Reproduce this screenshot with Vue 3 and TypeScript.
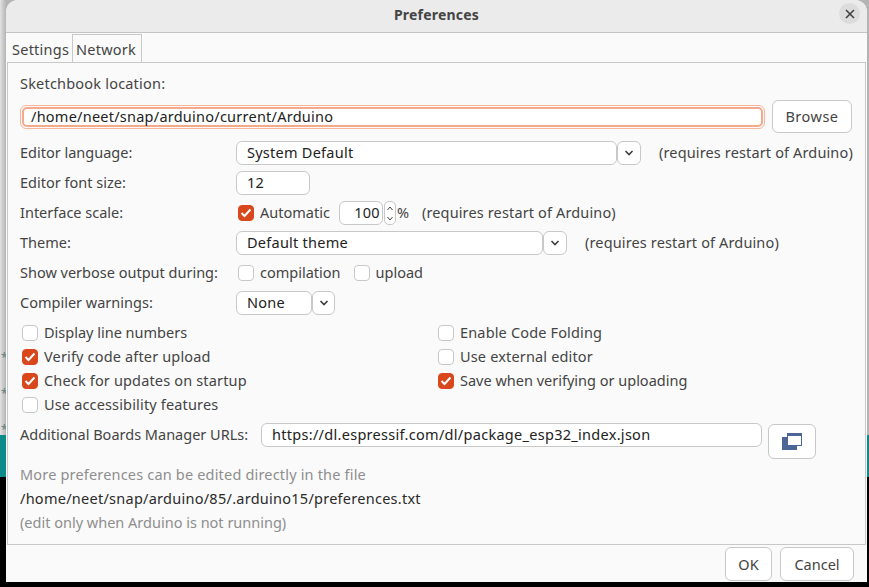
<script setup lang="ts">
const leftChecks = [
  { label: 'Display line numbers', on: false, tight: true },
  { label: 'Verify code after upload', on: true, tight: false },
  { label: 'Check for updates on startup', on: true, tight: false },
  { label: 'Use accessibility features', on: false, tight: false },
]
const rightChecks = [
  { label: 'Enable Code Folding', on: false, tight: false },
  { label: 'Use external editor', on: false, tight: false },
  { label: 'Save when verifying or uploading', on: true, tight: true },
]
</script>

<template>
  <div class="desktop">
    <div class="strip">
      <div class="strip-grey"></div>
      <div class="strip-teal"></div>
    </div>
    <span class="star star-a">*</span>
    <span class="star star-b">*</span>
    <span class="star star-c">*</span>
    <div class="dialog">
      <header class="titlebar">
        <span class="title">Preferences</span>
        <span class="close">
          <svg width="10" height="10" viewBox="0 0 10 10"><path d="M1 1l8 8M9 1l-8 8" stroke="#3d3d3d" stroke-width="1.500" fill="none" /></svg>
        </span>
      </header>
      <div class="body">
        <div class="tabs">
          <span class="tab tab-active">Settings</span>
          <span class="tab tab-idle">Network</span>
        </div>
        <div class="panel">
          <div class="sketch-label">Sketchbook location:</div>
          <div class="sketch-row">
            <div class="focus-ring"><div class="focus-inner">/home/neet/snap/arduino/current/Arduino</div></div>
            <button class="btn browse">Browse</button>
          </div>

          <div class="row row-lang">
            <span class="lbl">Editor language:</span>
            <div class="combo">
              <span class="field combo-lang">System Default</span>
              <span class="arrow"><svg width="10" height="6" viewBox="0 0 10 6"><path d="M1.500 1l3.500 3.500 3.500-3.500" stroke="#3d3d3d" stroke-width="1.600" fill="none" /></svg></span>
            </div>
            <span class="note note-lang">(requires restart of Arduino)</span>
          </div>

          <div class="row">
            <span class="lbl">Editor font size:</span>
            <span class="field font-size">12</span>
          </div>

          <div class="row">
            <span class="lbl">Interface scale:</span>
            <span class="check on scale-check"><svg width="12" height="10" viewBox="0 0 12 10"><path d="M1.500 5l3 3 6-6.500" stroke="#fff" stroke-width="2" fill="none" /></svg></span>
            <span class="txt">Automatic</span>
            <span class="field spin">100</span>
            <span class="spin-btn">
              <svg width="8" height="17" viewBox="0 0 8 17"><path d="M1.500 5l2.500-3 2.500 3M1.500 12l2.500 3 2.500-3" stroke="#444" stroke-width="1" fill="none" /></svg>
            </span>
            <span class="txt pct">%</span>
            <span class="note note-scale">(requires restart of Arduino)</span>
          </div>

          <div class="row">
            <span class="lbl">Theme:</span>
            <div class="combo">
              <span class="field combo-theme">Default theme</span>
              <span class="arrow"><svg width="10" height="6" viewBox="0 0 10 6"><path d="M1.500 1l3.500 3.500 3.500-3.500" stroke="#3d3d3d" stroke-width="1.600" fill="none" /></svg></span>
            </div>
            <span class="note note-theme">(requires restart of Arduino)</span>
          </div>

          <div class="row">
            <span class="lbl">Show verbose output during:</span>
            <span class="check verbose-check"></span>
            <span class="txt">compilation</span>
            <span class="check upload-check"></span>
            <span class="txt">upload</span>
          </div>

          <div class="row">
            <span class="lbl">Compiler warnings:</span>
            <div class="combo">
              <span class="field combo-none">None</span>
              <span class="arrow arrow-small"><svg width="10" height="6" viewBox="0 0 10 6"><path d="M1.500 1l3.500 3.500 3.500-3.500" stroke="#3d3d3d" stroke-width="1.600" fill="none" /></svg></span>
            </div>
          </div>

          <div class="checks">
            <div class="check-col col-left">
              <div v-for="c in leftChecks" :key="c.label" class="check-row" :class="{ tight: c.tight }">
                <span class="check" :class="{ on: c.on }"><svg v-if="c.on" width="12" height="10" viewBox="0 0 12 10"><path d="M1.500 5l3 3 6-6.500" stroke="#fff" stroke-width="2" fill="none" /></svg></span>
                <span class="txt">{{ c.label }}</span>
              </div>
            </div>
            <div class="check-col">
              <div v-for="c in rightChecks" :key="c.label" class="check-row" :class="{ tight: c.tight }">
                <span class="check" :class="{ on: c.on }"><svg v-if="c.on" width="12" height="10" viewBox="0 0 12 10"><path d="M1.500 5l3 3 6-6.500" stroke="#fff" stroke-width="2" fill="none" /></svg></span>
                <span class="txt">{{ c.label }}</span>
              </div>
            </div>
          </div>

          <div class="urls">
            <span class="lbl">Additional Boards Manager URLs:</span>
            <span class="field url">https://dl.espressif.com/dl/package_esp32_index.json</span>
            <button class="btn win-btn">
              <svg width="20" height="17" viewBox="0 0 20 17">
                <rect x="0" y="4" width="15" height="13" fill="#4a6596" />
                <rect x="5" y="0" width="15" height="13" fill="#4a6596" />
                <rect x="6" y="3" width="13" height="9" fill="#fff" />
              </svg>
            </button>
          </div>

          <div class="info info-first muted">More preferences can be edited directly in the file</div>
          <div class="info path">/home/neet/snap/arduino/85/.arduino15/preferences.txt</div>
          <div class="info muted">(edit only when Arduino is not running)</div>
        </div>
        <footer class="footer">
          <button class="btn ok">OK</button>
          <button class="btn cancel">Cancel</button>
        </footer>
      </div>
    </div>
  </div>
</template>

<style>
html, body { margin: 0; background: #000; overflow: hidden; }
</style>

<style scoped>
.desktop {
  position: relative;
  width: 869px;
  height: 587px;
  background: #000;
  overflow: hidden;
  font-family: "Noto Sans", sans-serif;
  font-size: 14.5px;
  color: #444;
}
.strip { position: absolute; inset: 0 0 auto 0; height: 477px; }
.strip-grey { height: 435px; background: linear-gradient(to right, #e2e2e2 0, #b4b4b4 6px, #b4b4b4 100%); }
.strip-teal { height: 42px; background: #0d8a8a; }
.star {
  position: absolute;
  left: 1px;
  font-size: 12px;
  line-height: 12px;
  color: #5f8080;
}
.star-a { top: 352px; }
.star-b { top: 388px; }
.star-c { top: 424px; }
.dialog {
  position: absolute;
  left: 6px;
  top: 0;
  width: 861px;
  height: 582px;
  background: #fafafa;
  border-radius: 12px 12px 0 0;
  overflow: hidden;
  display: flex;
  flex-direction: column;
  box-sizing: border-box;
}
.titlebar {
  height: 33px;
  flex: none;
  box-sizing: border-box;
  background: #ebebeb;
  border-bottom: 1px solid #c4c4c4;
  display: flex;
  align-items: center;
  justify-content: center;
  position: relative;
  padding-bottom: 4px;
}
.title { font-weight: 700; font-size: 14px; letter-spacing: 0.2px; }
.close {
  position: absolute;
  right: 7px;
  top: 3px;
  width: 21px;
  height: 21px;
  border-radius: 50%;
  background: #dcdcdc;
  display: flex;
  align-items: center;
  justify-content: center;
}
.body { flex: 1; display: flex; flex-direction: column; min-height: 0; }
.tabs { height: 29px; display: flex; flex: none; letter-spacing: 0.25px; }
.tab { box-sizing: border-box; display: flex; align-items: center; }
.tab-active { width: 66px; padding-left: 6px; padding-top: 2px; }
.tab-idle {
  margin-top: 1px;
  width: 70px;
  padding: 1px 0 0 3px;
  border: 1px solid #c8c8c8;
  border-bottom: none;
}
.panel {
  flex: 1;
  margin: 0 1px;
  border: 1px solid #c8c8c8;
  padding: 0 13px 0 12px;
  box-sizing: border-box;
  min-height: 0;
}
.sketch-label { height: 23px; margin-top: 9px; line-height: 23px; letter-spacing: 0.2px; }
.sketch-row { display: flex; align-items: center; margin-top: 5px; height: 33px; }
.focus-ring {
  width: 745px;
  height: 24px;
  flex: none;
  box-sizing: border-box;
  border: 1px solid #f6b69f;
  border-radius: 6px;
  padding: 1px;
  margin-right: 7px;
}
.focus-inner {
  height: 100%;
  box-sizing: border-box;
  border: 2px solid #f4a98d;
  border-radius: 5px;
  padding-left: 7px;
  line-height: 14px;
  background: #fff;
  color: #222;
  letter-spacing: 0.24px;
}
.btn {
  font: inherit;
  color: #444;
  background: #fff;
  border: 1px solid #c8c8c8;
  border-radius: 6px;
  padding: 0;
  box-sizing: border-box;
}
.browse { width: 80px; height: 33px; letter-spacing: 0.5px; padding-bottom: 1px; }
.row { display: flex; align-items: center; height: 24px; margin-top: 6px; }
.row-lang { margin-top: 8px; }
.lbl { width: 216px; flex: none; white-space: nowrap; padding-bottom: 2px; }
.txt { padding-bottom: 2px; }
.field {
  box-sizing: border-box;
  display: block;
  height: 24px;
  line-height: 20px;
  background: #fff;
  border: 1px solid #c8c8c8;
  border-radius: 6px;
  padding-left: 10px;
  color: #222;
  letter-spacing: 0.25px;
}
.combo { display: flex; }
.combo-lang { width: 381px; }
.combo-theme { width: 307px; }
.combo-none { width: 76px; }
.arrow {
  box-sizing: border-box;
  width: 24px;
  height: 24px;
  background: #fff;
  border: 1px solid #c8c8c8;
  border-radius: 6px;
  display: flex;
  align-items: center;
  justify-content: center;
}
.arrow-small { width: 23px; }
.note { letter-spacing: 0.14px; white-space: nowrap; padding-bottom: 2px; }
.note-lang { margin-left: 18px; }
.note-scale { margin-left: 13px; }
.note-theme { margin-left: 18px; }
.font-size { width: 74px; }
.check {
  box-sizing: border-box;
  width: 16px;
  height: 16px;
  flex: none;
  background: #fff;
  border: 1px solid #c8c8c8;
  border-radius: 4px;
  display: inline-flex;
  align-items: center;
  justify-content: center;
}
.check.on { background: #d8481c; border-color: #d8481c; }
.scale-check { margin-left: 2px; margin-right: 6px; }
.spin { width: 44px; margin-left: 9px; padding: 0 2px 0 0; text-align: right; }
.spin-btn {
  box-sizing: border-box;
  width: 12px;
  height: 24px;
  margin-left: 1px;
  border: 1px solid #c8c8c8;
  border-radius: 5px;
  background: #fff;
  display: flex;
  align-items: center;
  justify-content: center;
}
.pct { margin-left: 1px; }
.verbose-check { margin-left: 2px; margin-right: 6px; }
.upload-check { margin-left: 13px; margin-right: 6px; }
.checks { display: flex; margin-top: 6px; }
.check-col { display: flex; flex-direction: column; }
.col-left { width: 416px; }
.check-row {
  height: 24px;
  display: flex;
  align-items: center;
  gap: 6px;
  white-space: nowrap;
  padding-left: 2px;
  letter-spacing: 0.16px;
}
.check-row.tight { letter-spacing: 0; }
.urls { display: flex; align-items: flex-start; margin-top: 6px; height: 36px; }
.urls .lbl { width: 241px; line-height: 22px; padding: 0; }
.url { width: 501px; letter-spacing: 0.29px; }
.win-btn {
  width: 48px;
  height: 35px;
  margin: 1px 0 0 6px;
  display: flex;
  align-items: center;
  justify-content: center;
}
.info { height: 24px; line-height: 22px; white-space: nowrap; }
.info-first { margin-top: 4px; letter-spacing: 0.18px; }
.path { letter-spacing: 0.26px; color: #2a2a2a; }
.muted { color: #8e8e8e; }
.footer {
  flex: none;
  height: 37px;
  display: flex;
  justify-content: flex-end;
  gap: 8px;
  padding: 2px 13px 0 0;
  box-sizing: border-box;
}
.ok { width: 47px; height: 34px; }
.cancel { width: 74px; height: 34px; }
</style>
